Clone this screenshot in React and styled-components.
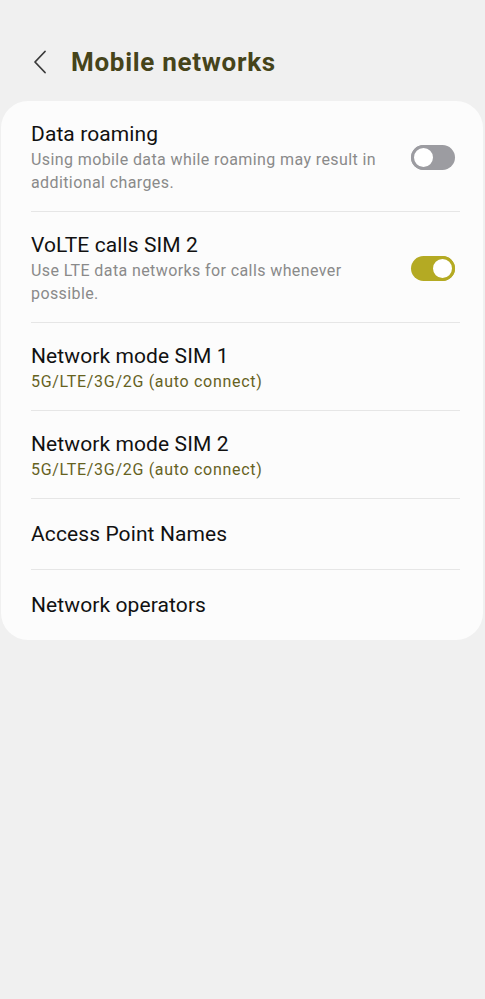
import React from 'react';
import styled, { createGlobalStyle } from 'styled-components';

const GlobalStyle = createGlobalStyle`
	html, body {
		margin: 0;
		padding: 0;
		background: #f0f0f0;
	}
	body {
		font-family: Roboto, "Noto Sans", "Liberation Sans", sans-serif;
		-webkit-font-smoothing: antialiased;
	}
`;

const Screen = styled.div`
	width: 485px;
	min-height: 999px;
	background: #f0f0f0;
`;

const Header = styled.header`
	height: 101px;
	box-sizing: border-box;
	display: flex;
	align-items: center;
	padding: 22px 0 0 31px;

	.back {
		width: 18px;
		height: 26px;
		display: flex;
		align-items: center;
		justify-content: center;
		margin-right: 22px;
	}

	h1 {
		margin: 0;
		font-size: 26px;
		font-weight: 700;
		color: #46441a;
		letter-spacing: 0.7px;
	}
`;

const Card = styled.section`
	margin: 0 2px 0 1px;
	background: #fcfcfc;
	border-radius: 27px;
	padding: 0 23px 0 30px;
`;

const Row = styled.div`
	display: flex;
	align-items: center;
	gap: 20px;
	padding: ${({ $single }) => ($single ? '21px 5px 21px 0' : '19px 5px 17px 0')};
	border-bottom: 1px solid #e6e6e6;

	&:last-child {
		border-bottom: none;
	}
`;

const Texts = styled.div`
	flex: 1;
	min-width: 0;
`;

const Title = styled.div`
	font-size: 21px;
	line-height: 28px;
	color: #111;
	letter-spacing: 0.1px;
`;

const Subtitle = styled.div`
	font-size: 16px;
	line-height: 23px;
	letter-spacing: ${({ $accent }) => ($accent ? '0.7px' : '0.4px')};
	color: ${({ $accent }) => ($accent ? '#66621f' : '#8a8a8a')};
`;

const Toggle = styled.div`
	flex: none;
	width: 44px;
	height: 25px;
	border-radius: 13px;
	box-sizing: border-box;
	background: ${({ $on }) => ($on ? '#b4aa23' : '#9c9ca1')};
	display: flex;
	justify-content: ${({ $on }) => ($on ? 'flex-end' : 'flex-start')};

	&::after {
		content: '';
		width: 25px;
		height: 25px;
		box-sizing: border-box;
		border-radius: 50%;
		background: #fff;
		border: 3px solid ${({ $on }) => ($on ? '#b4aa23' : '#9c9ca1')};
	}
`;

const settings = [
	{
		title: 'Data roaming',
		subtitle: 'Using mobile data while roaming may result in additional charges.',
		toggle: false,
	},
	{
		title: 'VoLTE calls SIM 2',
		subtitle: 'Use LTE data networks for calls whenever possible.',
		toggle: true,
	},
	{ title: 'Network mode SIM 1', subtitle: '5G/LTE/3G/2G (auto connect)', accent: true },
	{ title: 'Network mode SIM 2', subtitle: '5G/LTE/3G/2G (auto connect)', accent: true },
	{ title: 'Access Point Names' },
	{ title: 'Network operators' },
];

const BackIcon = () => (
	<svg width="14" height="24" viewBox="0 0 14 24" fill="none">
		<path d="M12 1.5 L2 12 L12 22.5" stroke="#3a3a3a" strokeWidth="1.8" strokeLinecap="round" strokeLinejoin="round" />
	</svg>
);

export default function App() {
	return (
		<Screen>
			<GlobalStyle />
			<Header>
				<span className="back">
					<BackIcon />
				</span>
				<h1>Mobile networks</h1>
			</Header>
			<Card>
				{settings.map((s) => (
					<Row key={s.title} $single={!s.subtitle}>
						<Texts>
							<Title>{s.title}</Title>
							{s.subtitle && <Subtitle $accent={s.accent}>{s.subtitle}</Subtitle>}
						</Texts>
						{s.toggle !== undefined && <Toggle $on={s.toggle} />}
					</Row>
				))}
			</Card>
		</Screen>
	);
}
